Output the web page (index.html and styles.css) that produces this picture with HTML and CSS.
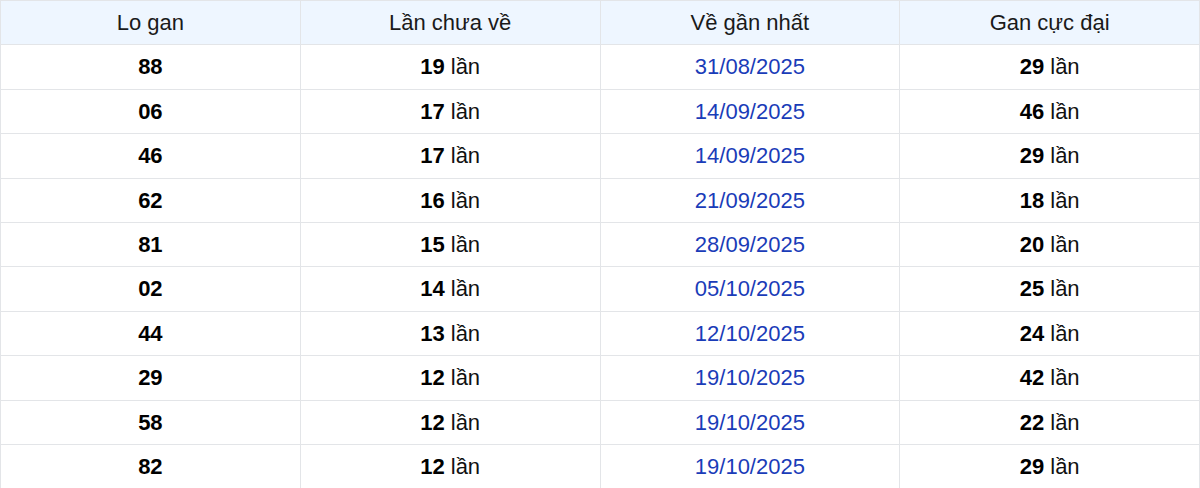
FILE: index.html
```html
<!DOCTYPE html>
<html lang="vi">
<head>
<meta charset="utf-8">
<link rel="stylesheet" href="styles.css">
</head>
<body>
<table class="gan-table">
  <thead>
    <tr><th>Lo gan</th><th>Lần chưa về</th><th>Về gần nhất</th><th>Gan cực đại</th></tr>
  </thead>
  <tbody>
    <tr><td><b>88</b></td><td><b>19</b> lần</td><td class="date">31/08/2025</td><td><b>29</b> lần</td></tr>
    <tr><td><b>06</b></td><td><b>17</b> lần</td><td class="date">14/09/2025</td><td><b>46</b> lần</td></tr>
    <tr><td><b>46</b></td><td><b>17</b> lần</td><td class="date">14/09/2025</td><td><b>29</b> lần</td></tr>
    <tr><td><b>62</b></td><td><b>16</b> lần</td><td class="date">21/09/2025</td><td><b>18</b> lần</td></tr>
    <tr><td><b>81</b></td><td><b>15</b> lần</td><td class="date">28/09/2025</td><td><b>20</b> lần</td></tr>
    <tr><td><b>02</b></td><td><b>14</b> lần</td><td class="date">05/10/2025</td><td><b>25</b> lần</td></tr>
    <tr><td><b>44</b></td><td><b>13</b> lần</td><td class="date">12/10/2025</td><td><b>24</b> lần</td></tr>
    <tr><td><b>29</b></td><td><b>12</b> lần</td><td class="date">19/10/2025</td><td><b>42</b> lần</td></tr>
    <tr><td><b>58</b></td><td><b>12</b> lần</td><td class="date">19/10/2025</td><td><b>22</b> lần</td></tr>
    <tr><td><b>82</b></td><td><b>12</b> lần</td><td class="date">19/10/2025</td><td><b>29</b> lần</td></tr>
  </tbody>
</table>
</body>
</html>
```
FILE: styles.css
```css
html, body {
  margin: 0;
  padding: 0;
  background: #ffffff;
}
body {
  font-family: "Liberation Sans", Arial, sans-serif;
  color: #111111;
}
.gan-table {
  width: 1200px;
  border-collapse: collapse;
  table-layout: fixed;
  font-size: 22px;
}
.gan-table th,
.gan-table td {
  border: 1px solid #e3e5e8;
  text-align: center;
  padding: 10px 8px;
  line-height: 23.4px;
}
.gan-table th {
  background: #eef6ff;
  font-weight: 400;
  color: #1a1a1a;
}
.gan-table b {
  font-weight: 700;
  color: #000;
}
.gan-table .date {
  color: #1a3cb8;
}
```
